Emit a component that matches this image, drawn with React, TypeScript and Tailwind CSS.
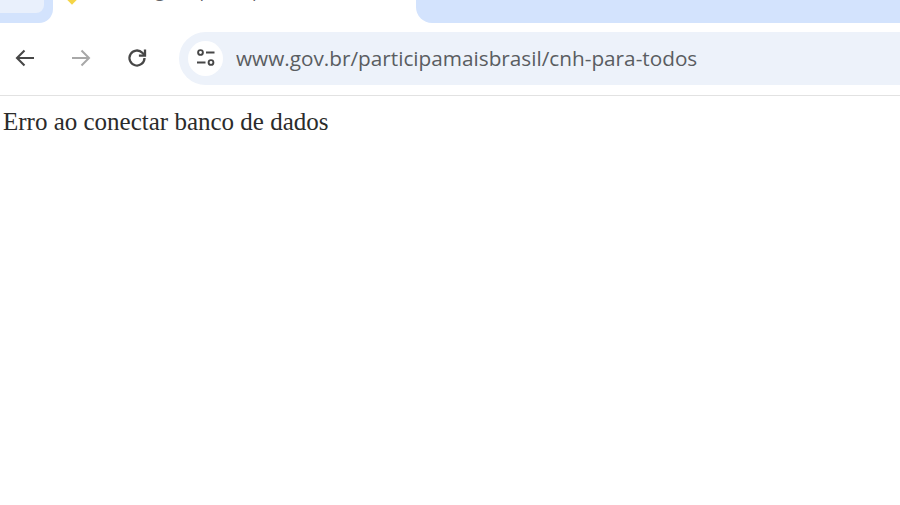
export default function App() {
  return (
    <div className="flex h-[505px] w-[900px] flex-col overflow-hidden bg-white">
      <div className="flex h-[23px] shrink-0">
        <div className="w-[53px] shrink-0 rounded-br-[14px] bg-[#d3e3fd] pr-[9px]">
          <div className="h-[13px] rounded-br-[8px] bg-[#e9f0fc]" />
        </div>
        <div className="relative w-[363px] shrink-0 overflow-hidden bg-white">
          <div className="absolute -top-[5px] left-[15px] h-[8px] w-[8px] rotate-45 bg-[#f5d547]" />
          <div className="absolute -top-[22px] left-[33px] whitespace-nowrap font-['Open_Sans',sans-serif] text-[18px] leading-[24px] text-[#5f6368]">
            Brasil Digital, participe
          </div>
        </div>
        <div className="flex-1 rounded-bl-[16px] bg-[#d3e3fd]" />
      </div>
      <div className="flex h-[73px] shrink-0 items-center border-b border-[#e2e2e2] pb-[2px] pl-[13px]">
        <svg width="24" height="24" viewBox="0 0 24 24" fill="none" stroke="#474747" strokeWidth="2.1" className="shrink-0">
          <path d="M21 12H4M11.5 4.5 4 12l7.5 7.5" />
        </svg>
        <svg width="24" height="24" viewBox="0 0 24 24" fill="none" stroke="#a8a8a8" strokeWidth="2" className="ml-[32px] shrink-0">
          <path d="M3 12h17M12.5 4.5 20 12l-7.5 7.5" />
        </svg>
        <svg width="24" height="24" viewBox="0 0 24 24" fill="none" stroke="#474747" strokeWidth="2.3" className="ml-[32px] shrink-0">
          <path d="M19.5 12a7.5 7.5 0 1 1-2.2-5.3L19.5 9" />
          <path d="M20 3.5V9.6h-6.1" />
        </svg>
        <div className="ml-[30px] flex h-[53px] flex-1 items-center rounded-l-[27px] bg-[#edf2fa] pl-[9px]">
          <div className="flex h-[35px] w-[35px] shrink-0 items-center justify-center rounded-full bg-white">
            <svg width="22" height="22" viewBox="0 0 22 22" fill="none" stroke="#474747" strokeWidth="1.9">
              <circle cx="5.5" cy="5.5" r="2.4" />
              <path d="M11 5.5h8.5M2 15.5h8.5" />
              <circle cx="16" cy="15.5" r="2.4" />
            </svg>
          </div>
          <span className="ml-[13px] whitespace-nowrap font-['Open_Sans',sans-serif] text-[20.75px] leading-none text-[#5a5d61]">
            www.gov.br/participamaisbrasil/cnh-para-todos
          </span>
        </div>
      </div>
      <p className="pl-[3px] pt-[13px] font-['Liberation_Serif',serif] text-[25px] leading-[26px] text-[#2b2b2b]">
        Erro ao conectar banco de dados
      </p>
    </div>
  );
}
